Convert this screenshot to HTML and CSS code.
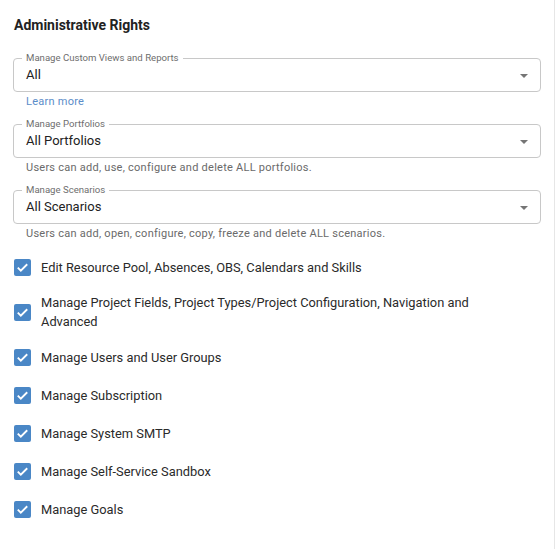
FILE: index.html
```html
<!DOCTYPE html>
<html>
<head>
<meta charset="utf-8">
<link rel="stylesheet" href="styles.css">
</head>
<body>
<div class="panel">
  <h2 class="title">Administrative Rights</h2>

  <div class="field first">
    <fieldset class="outline">
      <legend>Manage Custom Views and Reports</legend>
      <div class="select-row">
        <span class="value">All</span>
        <span class="arrow"></span>
      </div>
    </fieldset>
    <div class="helper link">Learn more</div>
  </div>

  <div class="field">
    <fieldset class="outline">
      <legend>Manage Portfolios</legend>
      <div class="select-row">
        <span class="value">All Portfolios</span>
        <span class="arrow"></span>
      </div>
    </fieldset>
    <div class="helper">Users can add, use, configure and delete ALL portfolios.</div>
  </div>

  <div class="field">
    <fieldset class="outline">
      <legend>Manage Scenarios</legend>
      <div class="select-row">
        <span class="value">All Scenarios</span>
        <span class="arrow"></span>
      </div>
    </fieldset>
    <div class="helper">Users can add, open, configure, copy, freeze and delete ALL scenarios.</div>
  </div>

  <ul class="checks">
    <li class="check"><span class="box"><svg viewBox="0 0 18 18" width="17" height="17"><path d="M4 9.2l3.2 3.2L14 5.6" fill="none" stroke="#fff" stroke-width="2"/></svg></span><span class="label">Edit Resource Pool, Absences, OBS, Calendars and Skills</span></li>
    <li class="check"><span class="box"><svg viewBox="0 0 18 18" width="17" height="17"><path d="M4 9.2l3.2 3.2L14 5.6" fill="none" stroke="#fff" stroke-width="2"/></svg></span><span class="label">Manage Project Fields, Project Types/Project Configuration, Navigation and Advanced</span></li>
    <li class="check"><span class="box"><svg viewBox="0 0 18 18" width="17" height="17"><path d="M4 9.2l3.2 3.2L14 5.6" fill="none" stroke="#fff" stroke-width="2"/></svg></span><span class="label">Manage Users and User Groups</span></li>
    <li class="check"><span class="box"><svg viewBox="0 0 18 18" width="17" height="17"><path d="M4 9.2l3.2 3.2L14 5.6" fill="none" stroke="#fff" stroke-width="2"/></svg></span><span class="label">Manage Subscription</span></li>
    <li class="check"><span class="box"><svg viewBox="0 0 18 18" width="17" height="17"><path d="M4 9.2l3.2 3.2L14 5.6" fill="none" stroke="#fff" stroke-width="2"/></svg></span><span class="label">Manage System SMTP</span></li>
    <li class="check"><span class="box"><svg viewBox="0 0 18 18" width="17" height="17"><path d="M4 9.2l3.2 3.2L14 5.6" fill="none" stroke="#fff" stroke-width="2"/></svg></span><span class="label">Manage Self-Service Sandbox</span></li>
    <li class="check"><span class="box"><svg viewBox="0 0 18 18" width="17" height="17"><path d="M4 9.2l3.2 3.2L14 5.6" fill="none" stroke="#fff" stroke-width="2"/></svg></span><span class="label">Manage Goals</span></li>
  </ul>
</div>
</body>
</html>
```

FILE: styles.css
```css
html, body {
  margin: 0;
  padding: 0;
  background: #fff;
}
body {
  font-family: Roboto, "Liberation Sans", Arial, sans-serif;
  color: #222;
}
.panel {
  box-sizing: border-box;
  width: 555px;
  height: 549px;
  border-right: 1px solid #e6e6e6;
  padding: 16px 13px 0 13px;
}
.title {
  margin: 0 0 0 1px;
  font-size: 14px;
  line-height: 18px;
  font-weight: 700;
  color: #222;
}
.field {
  margin-top: 8px;
}
.field.first {
  margin-top: 18px;
}
.outline {
  margin: 0;
  padding: 1px 12px 6px 12px;
  border: 1px solid #c8c8c8;
  border-radius: 4px;
  min-width: 0;
}
.outline legend {
  margin-left: -4px;
  padding: 0 4px;
  font-size: 9.6px;
  line-height: 12px;
  color: #6e6e6e;
}
.select-row {
  display: flex;
  align-items: center;
  justify-content: space-between;
  height: 20px;
}
.value {
  font-size: 13px;
  line-height: 20px;
  color: #222;
}
.arrow {
  width: 0;
  height: 0;
  border-left: 4.5px solid transparent;
  border-right: 4.5px solid transparent;
  border-top: 4.5px solid #757575;
  margin-top: 1px;
}
.helper {
  margin-top: 2px;
  padding-left: 13px;
  font-size: 11px;
  line-height: 16px;
  letter-spacing: 0.25px;
  color: #6a6a6a;
}
.helper.link {
  color: #5b8dc9;
}
.checks {
  list-style: none;
  margin: 6px 0 0 0;
  padding: 0;
}
.check {
  display: flex;
  align-items: center;
  gap: 10px;
  padding: 7px 0;
  min-height: 24px;
}
.box {
  flex: none;
  width: 17px;
  height: 17px;
  margin-left: 1px;
  border-radius: 2px;
  background: #4a87c6;
  display: flex;
}
.label {
  max-width: 450px;
  font-size: 12.85px;
  line-height: 19px;
  color: #2a2a2a;
}
```
